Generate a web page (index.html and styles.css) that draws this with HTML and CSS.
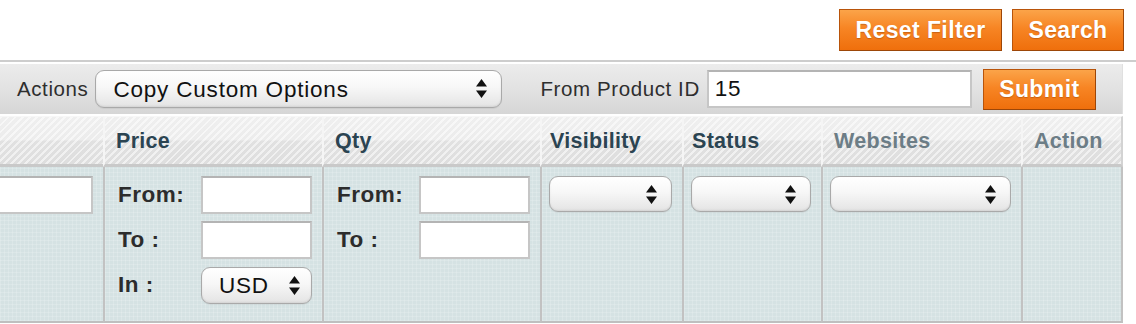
FILE: index.html
```html
<!DOCTYPE html>
<html lang="en">
<head>
<meta charset="UTF-8" />
<meta name="viewport" content="width=device-width, initial-scale=1" />
<link rel="stylesheet" href="styles.css">
</head>
<body>

<div class="topbar">
  <button class="btn">Reset Filter</button>
  <button class="btn">Search</button>
</div>

<div class="massaction">
  <label class="ma-label" for="actionSel">Actions</label>
  <div class="select select-actions">
    <select id="actionSel">
      <option>Copy Custom Options</option>
    </select>
    <svg class="arrows" width="11" height="19" viewBox="0 0 11 19"><path d="M5.5 0 L11 7.5 L0 7.5 Z M0 11.5 L11 11.5 L5.5 19 Z" fill="#111"/></svg>
  </div>
  <label class="ma-label ma-from" for="fromId">From Product ID</label>
  <input id="fromId" class="txt txt-from" type="text" value="15" />
  <button class="btn btn-submit">Submit</button>
</div>

<div class="grid">
  <div class="th"></div>
  <div class="th">Price</div>
  <div class="th">Qty</div>
  <div class="th th-tight">Visibility</div>
  <div class="th th-tight">Status</div>
  <div class="th th-muted">Websites</div>
  <div class="th th-muted th-last">Action</div>

  <div class="td td-first"><input class="txt txt-cut" type="text" /></div>
  <div class="td">
    <div class="range-row"><span class="flabel">From:</span><input class="txt txt-range" type="text" /></div>
    <div class="range-row"><span class="flabel">To :</span><input class="txt txt-range" type="text" /></div>
    <div class="range-row"><span class="flabel">In :</span>
      <div class="select select-cur">
        <select><option>USD</option></select>
        <svg class="arrows" width="11" height="19" viewBox="0 0 11 19"><path d="M5.5 0 L11 7.5 L0 7.5 Z M0 11.5 L11 11.5 L5.5 19 Z" fill="#111"/></svg>
      </div>
    </div>
  </div>
  <div class="td">
    <div class="range-row"><span class="flabel">From:</span><input class="txt txt-range" type="text" /></div>
    <div class="range-row"><span class="flabel">To :</span><input class="txt txt-range" type="text" /></div>
  </div>
  <div class="td">
    <div class="select select-vis">
      <select><option></option></select>
      <svg class="arrows" width="11" height="19" viewBox="0 0 11 19"><path d="M5.5 0 L11 7.5 L0 7.5 Z M0 11.5 L11 11.5 L5.5 19 Z" fill="#111"/></svg>
    </div>
  </div>
  <div class="td">
    <div class="select select-status">
      <select><option></option></select>
      <svg class="arrows" width="11" height="19" viewBox="0 0 11 19"><path d="M5.5 0 L11 7.5 L0 7.5 Z M0 11.5 L11 11.5 L5.5 19 Z" fill="#111"/></svg>
    </div>
  </div>
  <div class="td">
    <div class="select select-web">
      <select><option></option></select>
      <svg class="arrows" width="11" height="19" viewBox="0 0 11 19"><path d="M5.5 0 L11 7.5 L0 7.5 Z M0 11.5 L11 11.5 L5.5 19 Z" fill="#111"/></svg>
    </div>
  </div>
  <div class="td td-last"></div>
</div>

</body>
</html>
```

FILE: styles.css
```css
body {
  margin: 0;
  background: #fff;
  font-family: "Liberation Sans", Arial, sans-serif;
  color: #2f2f2f;
  width: 1136px;
}

.topbar {
  height: 62px;
  display: flex;
  justify-content: flex-end;
  align-items: flex-start;
  gap: 10px;
  padding: 9px 12px 0 0;
  box-sizing: border-box;
  border-bottom: 2px solid #cdcdcd;
}

.btn {
  font-family: "Liberation Sans", Arial, sans-serif;
  font-weight: bold;
  font-size: 23px;
  letter-spacing: 0.4px;
  color: #fff;
  height: 42px;
  padding: 0;
  border: 1px solid #b8540a;
  border-right-color: #9c4608;
  border-bottom-color: #9c4608;
  background: linear-gradient(#fba449, #f78524 45%, #ef6f0c);
  text-shadow: 0 1px 1px rgba(120, 50, 0, 0.35);
  cursor: pointer;
}

.topbar .btn:first-child {
  width: 163px;
}

.topbar .btn:last-child {
  width: 112px;
}

.massaction {
  width: 1123px;
  height: 50px;
  margin-top: 2px;
  box-sizing: border-box;
  display: flex;
  align-items: center;
  padding-left: 17px;
  background: linear-gradient(#ececec, #e2e2e2 50%, #d6d6d6);
  border-right: 1px solid #e0e0e0;
}

.ma-label {
  font-size: 20.5px;
  letter-spacing: 0.6px;
  color: #2e2e2e;
  margin-right: 7px;
}

.ma-from {
  margin-left: 38px;
}

.select {
  position: relative;
  box-sizing: border-box;
  height: 38px;
  border: 1px solid #a9a9a9;
  border-radius: 9px;
  background: linear-gradient(#ffffff, #f7f7f7 45%, #e4e4e4);
  box-shadow: inset 0 -1px 2px rgba(0, 0, 0, 0.08), 0 1px 1px rgba(0, 0, 0, 0.06);
}

.select select {
  appearance: none;
  -webkit-appearance: none;
  border: 0;
  background: transparent;
  width: 100%;
  height: 100%;
  font-family: "Liberation Sans", Arial, sans-serif;
  font-size: 22.5px;
  letter-spacing: 0.8px;
  color: #111;
  padding: 0 0 0 17px;
  outline: none;
}

.select .arrows {
  position: absolute;
  right: 14px;
  top: 8px;
  pointer-events: none;
}

.select-actions {
  width: 407px;
}

.txt {
  box-sizing: border-box;
  height: 38px;
  border: 2px solid #c6c6c6;
  border-top-color: #b4b4b4;
  background: #fff;
  font-family: "Liberation Sans", Arial, sans-serif;
  font-size: 22.5px;
  letter-spacing: 0.6px;
  color: #111;
  padding: 0 6px;
  outline: none;
}

.txt-from {
  width: 265px;
  margin-right: 11px;
}

.btn-submit {
  width: 113px;
  height: 41px;
  font-size: 23px;
  padding: 0;
}

.grid {
  width: 1123px;
  margin-top: 2px;
  display: grid;
  grid-template-columns: 103px 219px 218px 142px 139px 200px 102px;
  grid-template-rows: 51px 156px;
}

.th {
  box-sizing: border-box;
  display: flex;
  align-items: center;
  padding: 2px 0 0 11px;
  font-weight: bold;
  font-size: 21.5px;
  letter-spacing: 0.3px;
  color: #2b4452;
  border-top: 1px solid #f7f7f7;
  border-bottom: 3px solid #c9c9c9;
  border-left: 2px solid #f5f5f5;
  background:
    repeating-linear-gradient(135deg, rgba(255, 255, 255, 0.55) 0 2px, rgba(255, 255, 255, 0) 2px 5px),
    linear-gradient(#efefef 0, #ececec 48%, #e1e1e1 52%, #dedede 100%);
}

.th:first-child {
  border-left: 0;
}

.th-tight {
  padding-left: 8px;
}

.th-muted {
  color: #6c7d86;
}

.th-last {
  border-right: 2px solid #d3d3d3;
}

.td {
  box-sizing: border-box;
  padding: 9px 10px 0 12px;
  border-left: 2px solid #c2c2c2;
  border-bottom: 2px solid #bfbfbf;
  background:
    repeating-linear-gradient(0deg, rgba(255, 255, 255, 0.16) 0 1px, rgba(255, 255, 255, 0) 1px 4px),
    repeating-linear-gradient(90deg, rgba(255, 255, 255, 0.16) 0 1px, rgba(255, 255, 255, 0) 1px 4px),
    #d5e2e3;
}

.td-first {
  border-left: 0;
  padding-left: 0;
}

.td-last {
  border-right: 2px solid #c2c2c2;
}

.txt-cut {
  width: 93px;
  border-left: 0;
}

.range-row {
  display: flex;
  align-items: center;
  justify-content: space-between;
  height: 38px;
  margin-bottom: 7px;
}

.flabel {
  font-weight: bold;
  font-size: 22.5px;
  letter-spacing: 0.5px;
  color: #2c2c2c;
  padding-left: 1px;
}

.txt-range {
  width: 111px;
}

.select-cur {
  width: 111px;
  height: 37px;
}

.select-cur select {
  padding-left: 17px;
}

.select-cur .arrows {
  right: 11px;
}

.td .select-vis,
.td .select-status,
.td .select-web {
  height: 36px;
  margin-left: -5px;
}

.select-vis {
  width: 123px;
}

.select-status {
  width: 120px;
}

.select-web {
  width: 181px;
}
```
